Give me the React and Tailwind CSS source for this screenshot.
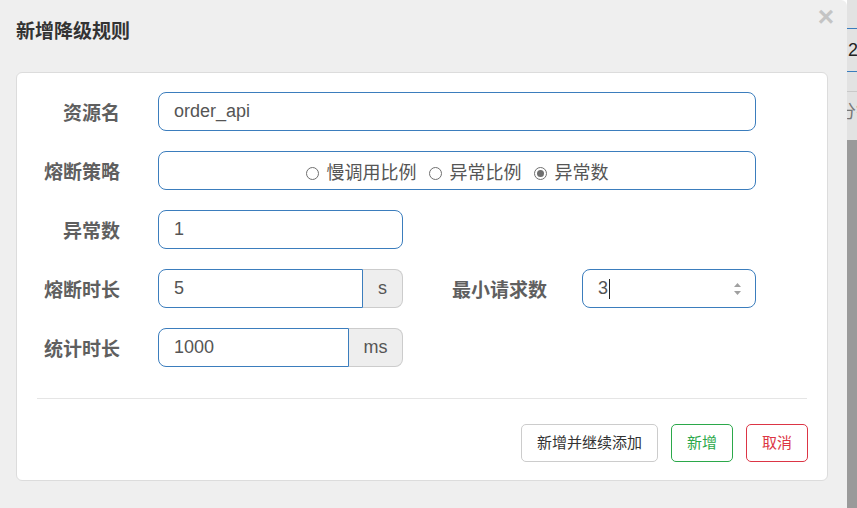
import { useState } from "react";

const font = "font-['Liberation_Sans','Noto_Sans_CJK_SC',sans-serif]";

function Label({ children }) {
  return (
    <div className="w-[103px] shrink-0 pt-[6px] text-right text-[19px] font-bold text-[#5f5f5f]">
      {children}
    </div>
  );
}

function Radio({ label, checked }) {
  return (
    <label className="flex items-center gap-[8px]">
      <span className="flex h-[13px] w-[13px] items-center justify-center rounded-full border border-[#6f6f6f] bg-white">
        {checked && <span className="h-[7px] w-[7px] rounded-full bg-[#6f6f6f]" />}
      </span>
      <span className="text-[18px] text-[#555]">{label}</span>
    </label>
  );
}

export default function App() {
  const [strategy] = useState(2);
  const inputCls =
    "h-[39px] border border-[#3b7dbd] bg-white px-[15px] text-[18px] text-[#555] flex items-center";

  return (
    <div className={`flex h-[508px] w-[857px] overflow-hidden ${font}`}>
      {/* modal */}
      <div className="flex w-[847px] shrink-0 flex-col rounded-tr-[6px] bg-[#efefef]">
        <div className="relative flex h-[72px] items-start pl-4 pt-[20px]">
          <h3 className="text-[19px] font-bold leading-[24px] text-[#333]">新增降级规则</h3>
          <span className="absolute right-[13px] top-[1px] text-[28px] font-bold leading-[32px] text-[#c4c4c4]">
            ×
          </span>
        </div>

        <div className="ml-4 flex h-[409px] w-[812px] flex-col rounded-[6px] border border-[#dcdcdc] bg-white pt-[19px]">
          <div className="flex flex-col gap-[20px]">
            <div className="flex items-center gap-[38px]">
              <Label>资源名</Label>
              <div className={`${inputCls} w-[598px] rounded-lg`}>order_api</div>
            </div>

            <div className="flex items-center gap-[38px]">
              <Label>熔断策略</Label>
              <div className={`${inputCls} w-[598px] justify-center gap-[12px] rounded-lg pt-[5px]`}>
                <Radio label="慢调用比例" checked={strategy === 0} />
                <Radio label="异常比例" checked={strategy === 1} />
                <Radio label="异常数" checked={strategy === 2} />
              </div>
            </div>

            <div className="flex items-center gap-[38px]">
              <Label>异常数</Label>
              <div className={`${inputCls} w-[245px] rounded-lg`}>1</div>
            </div>

            <div className="flex items-center gap-[38px]">
              <Label>熔断时长</Label>
              <div className="flex items-center">
                <div className="flex w-[245px]">
                  <div className={`${inputCls} flex-1 rounded-l-lg`}>5</div>
                  <div className="flex h-[39px] w-[40px] items-center justify-center rounded-r-lg border border-l-0 border-[#ccc] bg-[#eee] text-[18px] text-[#555]">
                    s
                  </div>
                </div>
                <div className="w-[144px] pt-[6px] text-right text-[19px] font-bold text-[#5f5f5f]">最小请求数</div>
                <div className={`${inputCls} ml-[35px] w-[174px] justify-between rounded-lg`}>
                  <span className="flex items-center">
                    3<span className="ml-[1px] h-[20px] w-px bg-[#222]" />
                  </span>
                  <span className="mr-[-1px] flex flex-col items-center gap-[4px]">
                    <svg width="7" height="4" viewBox="0 0 7 4">
                      <path d="M3.5 0L7 4H0z" fill="#a0a0a0" />
                    </svg>
                    <svg width="7" height="4" viewBox="0 0 7 4">
                      <path d="M0 0h7L3.5 4z" fill="#a0a0a0" />
                    </svg>
                  </span>
                </div>
              </div>
            </div>

            <div className="flex items-center gap-[38px]">
              <Label>统计时长</Label>
              <div className="flex w-[245px]">
                <div className={`${inputCls} flex-1 rounded-l-lg`}>1000</div>
                <div className="flex h-[39px] w-[54px] items-center justify-center rounded-r-lg border border-l-0 border-[#ccc] bg-[#eee] text-[18px] text-[#555]">
                  ms
                </div>
              </div>
            </div>
          </div>

          <div className="mx-5 mt-[31px] border-t border-[#e5e5e5]" />

          <div className="mr-[19px] mt-[25px] flex justify-end gap-[13px]">
            <button className="h-[38px] w-[137px] rounded-[5px] border border-[#ccc] bg-white text-[15px] text-[#333]">
              新增并继续添加
            </button>
            <button className="h-[38px] w-[62px] rounded-[5px] border border-[#2ba84a] bg-white text-[15px] text-[#2ba84a]">
              新增
            </button>
            <button className="h-[38px] w-[62px] rounded-[5px] border border-[#dc3545] bg-white text-[15px] text-[#dc3545]">
              取消
            </button>
          </div>
        </div>
      </div>

      {/* page behind the overlay */}
      <div className="flex w-[10px] flex-col overflow-hidden bg-[#9a9a9a]">
        <div className="flex h-[140px] flex-col bg-[#e2e2e2] text-[18px] leading-none text-[#222]">
          <div className="h-[29px] border-b border-[#3b7dbd]" />
          <div className="flex h-[43px] items-center border-b border-[#3b7dbd] pl-[1px]">2</div>
          <div className="h-[20px] border-b border-[#c9c9c9]" />
          <div className="flex h-[40px] items-center whitespace-nowrap text-[#777]">
            <span className="-ml-[9px]">分钟</span>
          </div>
        </div>
      </div>
    </div>
  );
}
